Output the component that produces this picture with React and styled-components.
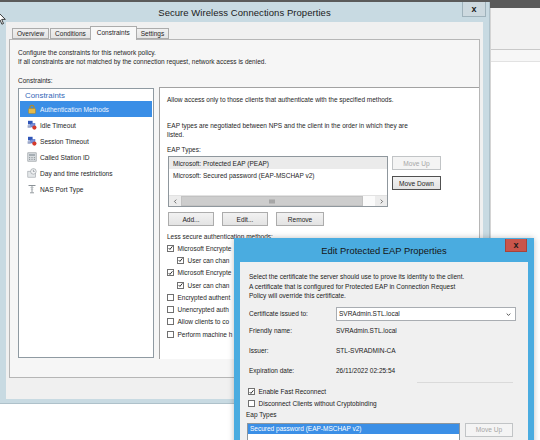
import React from "react";
import styled, { createGlobalStyle } from "styled-components";

const GlobalStyle = createGlobalStyle`
  html, body {
    margin: 0;
    padding: 0;
    background: #ffffff;
  }
  body {
    width: 540px;
    height: 440px;
    overflow: hidden;
    font-family: "Liberation Sans", Arial, sans-serif;
    color: #1e1e1e;
  }
  * {
    box-sizing: border-box;
  }
`;

const Desktop = styled.div`
  position: relative;
  width: 540px;
  height: 440px;
  overflow: hidden;
  background: #ffffff;
`;

const TopStrip = styled.div`
  height: 8px;
  background: #5a5a5a;
`;

const BackWindow = styled.div`
  position: absolute;
  left: 490px;
  top: 8px;
  width: 50px;
  height: 232px;
  background: #ffffff;
  border-left: 1px solid #d4d4d4;
`;

const BackHeader = styled.div`
  height: 42px;
  background: #f2f2f2;
  border-bottom: 1px solid #c9c9c9;
`;

const BackStripe = styled.div`
  height: 12px;
  background: #f7f7f7;
  border-bottom: 1px solid #e2e2e2;
`;

const Cursor = styled.svg`
  position: absolute;
  left: -3px;
  top: 11px;
`;

/* ---------- main property sheet ---------- */

const MainWindow = styled.div`
  position: absolute;
  left: 0;
  top: 2px;
  width: 490px;
  height: 402px;
  background: #c8dae2;
  border-right: 1px solid #aec1ca;
  border-bottom: 1px solid #aec1ca;
  padding: 0 6px 4px 6px;
  display: flex;
  flex-direction: column;
`;

const TitleBar = styled.div`
  position: relative;
  height: 20px;
  flex: none;
  display: flex;
  align-items: center;
  justify-content: center;
  font-size: 9.5px;
  color: #1b1b1b;
  letter-spacing: 0.05px;
`;

const CloseButton = styled.div`
  position: absolute;
  top: ${(p) => p.$top}px;
  right: ${(p) => p.$right}px;
  width: ${(p) => p.$w}px;
  height: ${(p) => p.$h}px;
  background: ${(p) => (p.$danger ? "#c9554b" : "#cdd9df")};
  border: 1px solid ${(p) => (p.$danger ? "#a8433a" : "#9fb2bb")};
  border-top: none;
  display: flex;
  align-items: center;
  justify-content: center;
  font-size: 9px;
  font-weight: bold;
  color: #1a1a1a;
  line-height: 1;
`;

const Content = styled.div`
  flex: 1;
  background: #f0f0f0;
  padding: 5px 3px 0 3px;
  display: flex;
  flex-direction: column;
`;

const TabStrip = styled.div`
  height: 12px;
  display: flex;
  align-items: flex-end;
  padding-left: 3px;
  gap: 1px;
  font-size: 6.5px;
`;

const Tab = styled.div`
  position: relative;
  height: ${(p) => (p.$active ? 14 : 11)}px;
  margin: 0 ${(p) => (p.$active ? -2 : 0)}px ${(p) => (p.$active ? -1 : 0)}px;
  padding: 0 ${(p) => (p.$active ? 6 : 4)}px;
  z-index: ${(p) => (p.$active ? 2 : 1)};
  display: flex;
  align-items: center;
  border: 1px solid #acacac;
  border-bottom: ${(p) => (p.$active ? "none" : "1px solid #acacac")};
  background: ${(p) => (p.$active ? "#f8f8f8" : "linear-gradient(#f0f0f0, #e4e4e4)")};
  padding-bottom: ${(p) => (p.$active ? 2 : 0)}px;
  color: #1e1e1e;
  white-space: nowrap;
`;

const TabPanel = styled.div`
  height: 339px;
  border: 1px solid #b6b6b6;
  background: #f6f6f6;
  padding: 8px 0 0 8px;
  font-size: 6.5px;
  line-height: 9px;
`;

const Line = styled.div`
  white-space: nowrap;
  margin-top: ${(p) => p.$mt || 0}px;
  margin-left: ${(p) => p.$ml || 0}px;
`;

const Body = styled.div`
  display: flex;
  align-items: flex-start;
  gap: 5px;
  margin-top: 2.5px;
`;

/* ---------- constraints list ---------- */

const ConstraintList = styled.div`
  width: 136px;
  height: 270px;
  margin-top: 1px;
  background: #ffffff;
  border: 1px solid #8f9aa2;
  padding: 0 1px;
`;

const GroupHeader = styled.div`
  height: 12px;
  padding-left: 5px;
  display: flex;
  align-items: center;
  font-size: 7.9px;
  color: #3568b8;
`;

const ListItem = styled.div`
  height: 16px;
  display: flex;
  align-items: center;
  gap: 3px;
  padding-left: 7px;
  background: ${(p) => (p.$selected ? "#3a8ee6" : "transparent")};
  color: ${(p) => (p.$selected ? "#eef5ff" : "#1e1e1e")};
  white-space: nowrap;
  font-size: 6.6px;
`;

const IconBox = styled.svg`
  flex: none;
  width: 10px;
  height: 10px;
`;

/* ---------- right panel ---------- */

const RightPanel = styled.div`
  width: 320px;
  height: 272px;
  background: #ffffff;
  border-top: 1px solid #a2a2a2;
  border-left: 1px solid #a2a2a2;
  padding: 6.5px 0 0 7px;
  overflow: hidden;
  white-space: nowrap;
`;

const ListRow = styled.div`
  display: flex;
  align-items: flex-start;
  gap: 4px;
  margin-top: 2.5px;
  margin-left: 1px;
`;

const ListBox = styled.div`
  width: ${(p) => p.$w}px;
  height: ${(p) => p.$h}px;
  background: #ffffff;
  border: 1px solid #8f979d;
  display: flex;
  flex-direction: column;
  overflow: hidden;
`;

const ListRows = styled.div`
  flex: 1;
`;

const EapItem = styled.div`
  height: ${(p) => p.$h || 12}px;
  display: flex;
  align-items: center;
  padding-left: ${(p) => p.$pl || 4}px;
  background: ${(p) => p.$bg || "transparent"};
  color: ${(p) => p.$color || "#1e1e1e"};
`;

const ScrollBar = styled.div`
  height: 11px;
  display: flex;
  border-top: 1px solid #e2e2e2;
`;

const ScrollArrow = styled.div`
  width: 12px;
  background: #ececec;
  display: flex;
  align-items: center;
  justify-content: center;
`;

const ScrollThumb = styled.div`
  width: 182px;
  background: #cdcdcd;
  border: 1px solid #c2c2c2;
  display: flex;
  align-items: center;
  justify-content: center;
`;

const ScrollTrack = styled.div`
  flex: 1;
  background: #fbfbfb;
`;

const ButtonColumn = styled.div`
  display: flex;
  flex-direction: column;
  gap: 6px;
`;

const Button = styled.div`
  width: ${(p) => p.$w}px;
  height: 14px;
  display: flex;
  align-items: center;
  justify-content: center;
  font-size: 6.6px;
  border: 1px solid ${(p) => (p.$disabled ? "#c1c4c6" : p.$default ? "#505050" : "#acacac")};
  background: ${(p) => (p.$disabled ? "#f4f4f4" : "linear-gradient(#f2f2f2, #e3e3e3)")};
  color: ${(p) => (p.$disabled ? "#a6a6a6" : "#1e1e1e")};
  white-space: nowrap;
  flex: none;
`;

const ButtonRow = styled.div`
  display: flex;
  gap: 8px;
  margin-top: 5px;
  margin-left: 1px;
`;

/* the dialog covers everything right of x=234; only the visible part of each label is shown */
const CheckList = styled.div`
  margin-top: 1.5px;
  width: 67px;
  overflow: hidden;
`;

const CheckRow = styled.div`
  height: ${(p) => p.$h || 12.3}px;
  display: flex;
  align-items: center;
  gap: 3.5px;
  padding-left: ${(p) => p.$indent || 0}px;
  margin-left: ${(p) => p.$ml || 0}px;
  margin-top: ${(p) => p.$mt || 0}px;
  white-space: nowrap;
`;

const Box = styled.div`
  width: 7px;
  height: 7px;
  flex: none;
  background: #ffffff;
  border: 1px solid #707070;
  display: flex;
  align-items: center;
  justify-content: center;
`;

/* ---------- EAP dialog ---------- */

const Dialog = styled.div`
  position: absolute;
  left: 234px;
  top: 238px;
  width: 300px;
  height: 212px;
  background: #4aace0;
  padding: 0 6px;
  display: flex;
  flex-direction: column;
  box-shadow: 0 0 6px rgba(0, 0, 0, 0.25);
`;

const DialogTitle = styled.div`
  position: relative;
  height: 24px;
  flex: none;
  display: flex;
  align-items: center;
  justify-content: center;
  font-size: 9.4px;
  color: #151515;
`;

const DialogBody = styled.div`
  flex: 1;
  background: #f0f0f0;
  padding: 10px 0 0 9px;
  font-size: 6.5px;
  line-height: 9.5px;
  color: #1a1a1a;
  white-space: nowrap;
`;

const FieldRow = styled.div`
  display: flex;
  align-items: center;
  height: ${(p) => p.$h}px;
  margin-top: ${(p) => p.$mt || 0}px;
`;

const FieldLabel = styled.div`
  width: 87px;
  flex: none;
`;

const Select = styled.div`
  width: 180px;
  height: 14px;
  background: #ffffff;
  border: 1px solid #a9adb2;
  display: flex;
  align-items: center;
  justify-content: space-between;
  padding: 0 4px 0 2px;
`;

const Separator = styled.div`
  width: 96px;
  height: 1px;
  margin: 1px 0 0 168px;
  background: #dadada;
`;

const EapRow = styled.div`
  display: flex;
  align-items: flex-start;
  gap: 5px;
  margin: 2.5px 0 0 -2px;
`;

const LockIcon = () => (
  <IconBox viewBox="0 0 10 10">
    <path d="M3 5V3.4a2 2 0 0 1 4 0V5" fill="none" stroke="#b08a2e" strokeWidth="1.1" />
    <rect x="1.5" y="4.6" width="7" height="5" rx="0.8" fill="#e6ba4a" stroke="#a7821f" strokeWidth="0.5" />
  </IconBox>
);

const NetIcon = () => (
  <IconBox viewBox="0 0 10 10">
    <rect x="1" y="0.8" width="4.6" height="3.6" fill="#2f55b8" />
    <rect x="3.4" y="3.4" width="4.6" height="3.6" fill="#7a8fd8" stroke="#2f55b8" strokeWidth="0.4" />
    <rect x="0.6" y="5.2" width="3" height="2.6" fill="#9aa6c8" />
    <circle cx="7.4" cy="7.6" r="2.1" fill="#d43a2c" />
  </IconBox>
);

const StationIcon = () => (
  <IconBox viewBox="0 0 10 10">
    <rect x="0.8" y="0.8" width="8.4" height="8.4" fill="#d9dde0" stroke="#8a9196" strokeWidth="0.6" />
    <rect x="2" y="2" width="6" height="2" fill="#a6aeb4" />
    <path d="M2 5.6h1.2M4.4 5.6h1.2M6.8 5.6h1.2M2 7.4h1.2M4.4 7.4h1.2M6.8 7.4h1.2" stroke="#7c8489" strokeWidth="0.8" />
  </IconBox>
);

const ClockIcon = () => (
  <IconBox viewBox="0 0 10 10">
    <rect x="0.8" y="3.2" width="7.6" height="6" fill="#e4e7e9" stroke="#9aa0a5" strokeWidth="0.6" />
    <circle cx="6.4" cy="3.4" r="2.8" fill="#f2f3f4" stroke="#8e959a" strokeWidth="0.6" />
    <path d="M6.4 1.8v1.7h1.2" fill="none" stroke="#707880" strokeWidth="0.6" />
  </IconBox>
);

const PortIcon = () => (
  <IconBox viewBox="0 0 10 10">
    <path d="M1.5 1.5h7" stroke="#8a9196" strokeWidth="1" />
    <path d="M5 1.5v7M3 8.8h4" stroke="#8a9196" strokeWidth="0.9" />
    <path d="M3.4 3.5h3.2M3.8 5.3h2.4" stroke="#b0b6ba" strokeWidth="0.7" />
  </IconBox>
);

const Check = ({ checked }) => (
  <Box>
    {checked && (
      <svg width="6" height="6" viewBox="0 0 6 6">
        <polyline points="0.8,3.1 2.3,4.7 5.3,1" fill="none" stroke="#1c1c1c" strokeWidth="1.1" />
      </svg>
    )}
  </Box>
);

const Chevron = ({ dir }) => (
  <svg width="5" height="5" viewBox="0 0 5 5">
    {dir === "left" && <polyline points="3.3,0.6 1.4,2.5 3.3,4.4" fill="none" stroke="#555" strokeWidth="0.8" />}
    {dir === "right" && <polyline points="1.7,0.6 3.6,2.5 1.7,4.4" fill="none" stroke="#555" strokeWidth="0.8" />}
    {dir === "down" && <polyline points="0.7,1.6 2.5,3.4 4.3,1.6" fill="none" stroke="#444" strokeWidth="0.9" />}
  </svg>
);

const Grip = () => (
  <svg width="6" height="5" viewBox="0 0 6 5">
    <path d="M1 0.5v4M3 0.5v4M5 0.5v4" stroke="#6c6c6c" strokeWidth="0.8" />
  </svg>
);

const tabs = ["Overview", "Conditions", "Constraints", "Settings"];

const constraints = [
  { label: "Authentication Methods", icon: <LockIcon />, selected: true },
  { label: "Idle Timeout", icon: <NetIcon /> },
  { label: "Session Timeout", icon: <NetIcon /> },
  { label: "Called Station ID", icon: <StationIcon /> },
  { label: "Day and time restrictions", icon: <ClockIcon /> },
  { label: "NAS Port Type", icon: <PortIcon /> },
];

const lessSecure = [
  { label: "Microsoft Encrypte", checked: true },
  { label: "User can chan", checked: true, indent: 10 },
  { label: "Microsoft Encrypte", checked: true },
  { label: "User can chan", checked: true, indent: 10 },
  { label: "Encrypted authent" },
  { label: "Unencrypted auth" },
  { label: "Allow clients to co" },
  { label: "Perform machine h" },
];

const certInfo = [
  ["Friendly name:", "SVRAdmin.STL.local"],
  ["Issuer:", "STL-SVRADMIN-CA"],
  ["Expiration date:", "26/11/2022 02:25:54"],
];

const App = () => {
  return (
    <Desktop>
      <GlobalStyle />
      <TopStrip />
      <BackWindow>
        <BackHeader />
        <BackStripe />
      </BackWindow>

      <MainWindow>
        <TitleBar>
          Secure Wireless Connections Properties
          <CloseButton $top={0} $right={-3} $w={24} $h={15}>x</CloseButton>
        </TitleBar>
        <Content>
          <TabStrip>
            {tabs.map((t) => (
              <Tab key={t} $active={t === "Constraints"}>{t}</Tab>
            ))}
          </TabStrip>
          <TabPanel>
            <Line>Configure the constraints for this network policy.</Line>
            <Line>If all constraints are not matched by the connection request, network access is denied.</Line>
            <Line $mt={9.5}>Constraints:</Line>
            <Body>
              <ConstraintList>
                <GroupHeader>Constraints</GroupHeader>
                {constraints.map((c) => (
                  <ListItem key={c.label} $selected={c.selected}>
                    {c.icon}
                    {c.label}
                  </ListItem>
                ))}
              </ConstraintList>

              <RightPanel>
                <Line>Allow access only to those clients that authenticate with the specified methods.</Line>
                <Line $mt={17}>EAP types are negotiated between NPS and the client in the order in which they are</Line>
                <Line>listed.</Line>
                <Line $mt={6}>EAP Types:</Line>
                <ListRow>
                  <ListBox $w={220} $h={51}>
                    <ListRows>
                      <EapItem $bg="#ebebeb">Microsoft: Protected EAP (PEAP)</EapItem>
                      <EapItem>Microsoft: Secured password (EAP-MSCHAP v2)</EapItem>
                    </ListRows>
                    <ScrollBar>
                      <ScrollArrow><Chevron dir="left" /></ScrollArrow>
                      <ScrollThumb><Grip /></ScrollThumb>
                      <ScrollTrack />
                      <ScrollArrow><Chevron dir="right" /></ScrollArrow>
                    </ScrollBar>
                  </ListBox>
                  <ButtonColumn>
                    <Button $w={49} $disabled>Move Up</Button>
                    <Button $w={49} $default>Move Down</Button>
                  </ButtonColumn>
                </ListRow>
                <ButtonRow>
                  <Button $w={46}>Add...</Button>
                  <Button $w={46}>Edit...</Button>
                  <Button $w={48}>Remove</Button>
                </ButtonRow>
                <Line $mt={5.5}>Less secure authentication methods:</Line>
                <CheckList>
                  {lessSecure.map((c, i) => (
                    <CheckRow key={i} $indent={c.indent}>
                      <Check checked={c.checked} />
                      {c.label}
                    </CheckRow>
                  ))}
                </CheckList>
              </RightPanel>
            </Body>
          </TabPanel>
        </Content>
      </MainWindow>

      <Cursor width="9" height="14" viewBox="0 0 9 14">
        <path d="M0.5 0.5v11l2.6-2.5 1.8 4.2 1.6-0.7-1.8-4.1h3.6z" fill="#ffffff" stroke="#111" strokeWidth="0.8" />
      </Cursor>

      <Dialog>
        <DialogTitle>
          Edit Protected EAP Properties
          <CloseButton $danger $top={1} $right={1} $w={22} $h={13}>x</CloseButton>
        </DialogTitle>
        <DialogBody>
          <Line>Select the certificate the server should use to prove its identity to the client.</Line>
          <Line>A certificate that is configured for Protected EAP in Connection Request</Line>
          <Line>Policy will override this certificate.</Line>
          <FieldRow $h={14} $mt={6.5}>
            <FieldLabel>Certificate issued to:</FieldLabel>
            <Select>
              <span>SVRAdmin.STL.local</span>
              <Chevron dir="down" />
            </Select>
          </FieldRow>
          {certInfo.map(([k, v]) => (
            <FieldRow key={k} $h={20}>
              <FieldLabel>{k}</FieldLabel>
              <span>{v}</span>
            </FieldRow>
          ))}
          <Separator />
          <CheckRow $h={11.5} $ml={-1} $mt={3}>
            <Check checked />
            Enable Fast Reconnect
          </CheckRow>
          <CheckRow $h={11.5} $ml={-1}>
            <Check />
            Disconnect Clients without Cryptobinding
          </CheckRow>
          <CheckRow $h={11.5} $ml={-3}>Eap Types</CheckRow>
          <EapRow>
            <ListBox $w={213} $h={30}>
              <EapItem $h={9.5} $pl={2} $bg="#3b8fe6" $color="#ffffff">
                Secured password (EAP-MSCHAP v2)
              </EapItem>
            </ListBox>
            <Button $w={48} $disabled>Move Up</Button>
          </EapRow>
        </DialogBody>
      </Dialog>
    </Desktop>
  );
};

export default App;
